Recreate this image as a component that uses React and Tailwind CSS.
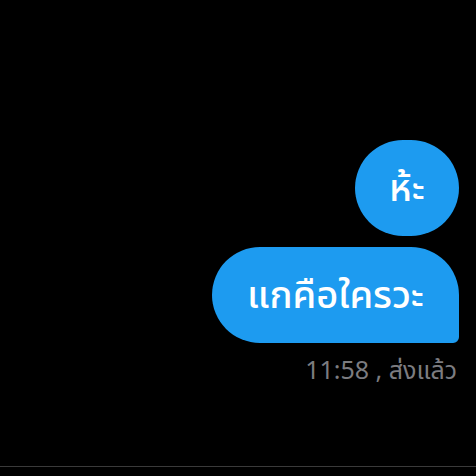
import React from "react";

const App = () => {
  return (
    <div
      className="w-[476px] h-[476px] bg-black flex flex-col overflow-hidden"
      style={{ fontFamily: '"Noto Sans Thai", "Noto Sans", "Liberation Sans", sans-serif' }}
    >
      <div className="flex flex-col items-end pr-[17px] pt-[140px] gap-[11px]">
        {/* first bubble */}
        <div className="w-[104px] h-[96px] rounded-[48px] bg-[#1d9bf0] flex items-center justify-center pt-[4px] text-white text-[38px] font-medium leading-none">
          ห้ะ
        </div>
        {/* second bubble */}
        <div className="w-[247px] h-[96px] rounded-[48px] rounded-br-[6px] bg-[#1d9bf0] flex items-center justify-center pt-[4px] text-white text-[38px] font-medium leading-none">
          แกคือใครวะ
        </div>
      </div>
      <div className="flex justify-end pr-[19px] mt-[16px] text-[25px] leading-none text-[#7c7c80]">
        11:58 , ส่งแล้ว
      </div>
      <div className="mt-auto mb-[9px] h-px bg-[#3a3a3a]" />
    </div>
  );
};

export default App;
